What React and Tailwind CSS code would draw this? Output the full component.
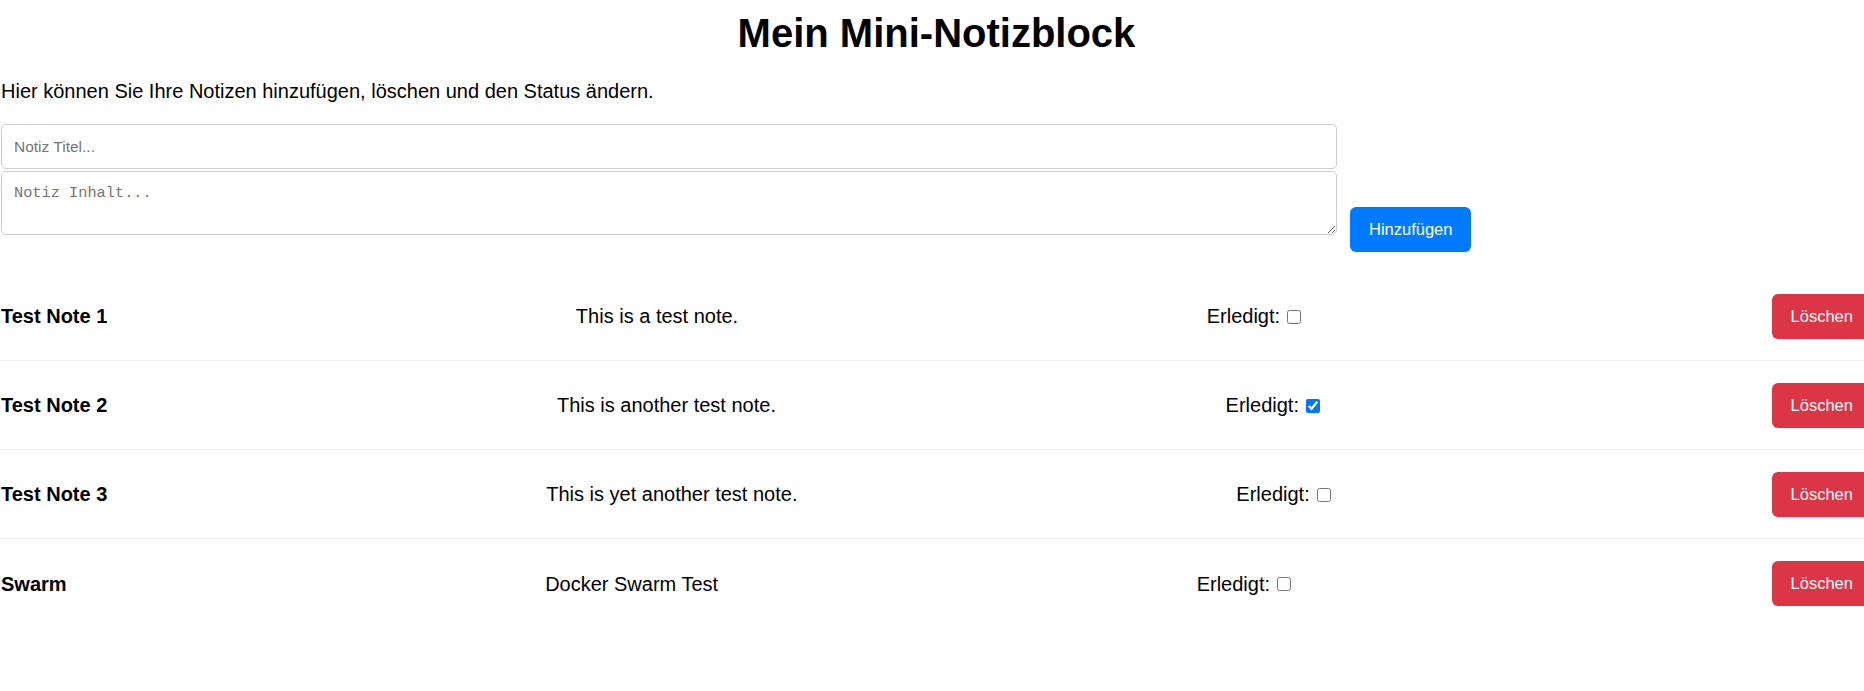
import { useState } from "react";

const initialNotes = [
  { id: 1, title: "Test Note 1", content: "This is a test note.", done: false },
  { id: 2, title: "Test Note 2", content: "This is another test note.", done: true },
  { id: 3, title: "Test Note 3", content: "This is yet another test note.", done: false },
  { id: 4, title: "Swarm", content: "Docker Swarm Test", done: false },
];

const App = () => {
  const [notes, setNotes] = useState(initialNotes);
  const [title, setTitle] = useState("");
  const [content, setContent] = useState("");

  const addNote = () => {
    if (!title.trim()) return;
    setNotes([...notes, { id: Date.now(), title, content, done: false }]);
    setTitle("");
    setContent("");
  };

  const toggleNote = (id) => {
    setNotes(notes.map(n => (n.id === id ? { ...n, done: !n.done } : n)));
  };

  const deleteNote = (id) => {
    setNotes(notes.filter(n => n.id !== id));
  };

  return (
    <div className="min-h-screen overflow-hidden bg-white text-black font-['Liberation_Sans',Arial,sans-serif]">
      <div className="w-[1872px] pl-[1px]">
        <h1 className="mt-[10px] text-center text-[40px] leading-[46px] font-bold">Mein Mini-Notizblock</h1>
        <p className="mt-[24px] text-[20px] leading-[23px]">
          Hier können Sie Ihre Notizen hinzufügen, löschen und den Status ändern.
        </p>

        {/* Formular */}
        <div className="mt-[21px] flex items-start gap-[13px]">
          <div className="flex w-[1336px] flex-col gap-[2px]">
            <input
              type="text"
              placeholder="Notiz Titel..."
              value={title}
              onChange={(e) => setTitle(e.target.value)}
              className="h-[45px] w-full rounded-[5px] border border-[#ccc] px-[12px] text-[15.5px] outline-none placeholder:text-[#757575]"
            />
            <textarea
              placeholder="Notiz Inhalt..."
              value={content}
              onChange={(e) => setContent(e.target.value)}
              className="h-[64px] w-full rounded-[5px] border border-[#ccc] px-[12px] pt-[12px] font-['Liberation_Mono',monospace] text-[15.3px] leading-[19px] outline-none placeholder:text-[#757575]"
            />
          </div>
          <button
            onClick={addNote}
            className="mt-[83px] h-[45px] rounded-[6px] bg-[#007bff] px-[19px] text-[16.5px] text-white"
          >
            Hinzufügen
          </button>
        </div>

        {/* Notizliste */}
        <div className="mt-[20px]">
          {notes.map(note => (
            <div
              key={note.id}
              className="flex h-[89px] items-center justify-between border-b border-[#eee] text-[20px] last:border-b-0"
            >
              <strong className="font-bold">{note.title}</strong>
              <span>{note.content}</span>
              <label className="flex items-center">
                Erledigt:
                <input
                  type="checkbox"
                  checked={note.done}
                  onChange={() => toggleNote(note.id)}
                  className="ml-[7px] mr-[2px] mt-[1px] h-[14px] w-[14px]"
                />
              </label>
              <button
                onClick={() => deleteNote(note.id)}
                className="h-[45px] rounded-[6px] bg-[#dc3545] px-[19px] text-[16.5px] text-white"
              >
                Löschen
              </button>
            </div>
          ))}
        </div>
      </div>
    </div>
  );
};

export default App;
